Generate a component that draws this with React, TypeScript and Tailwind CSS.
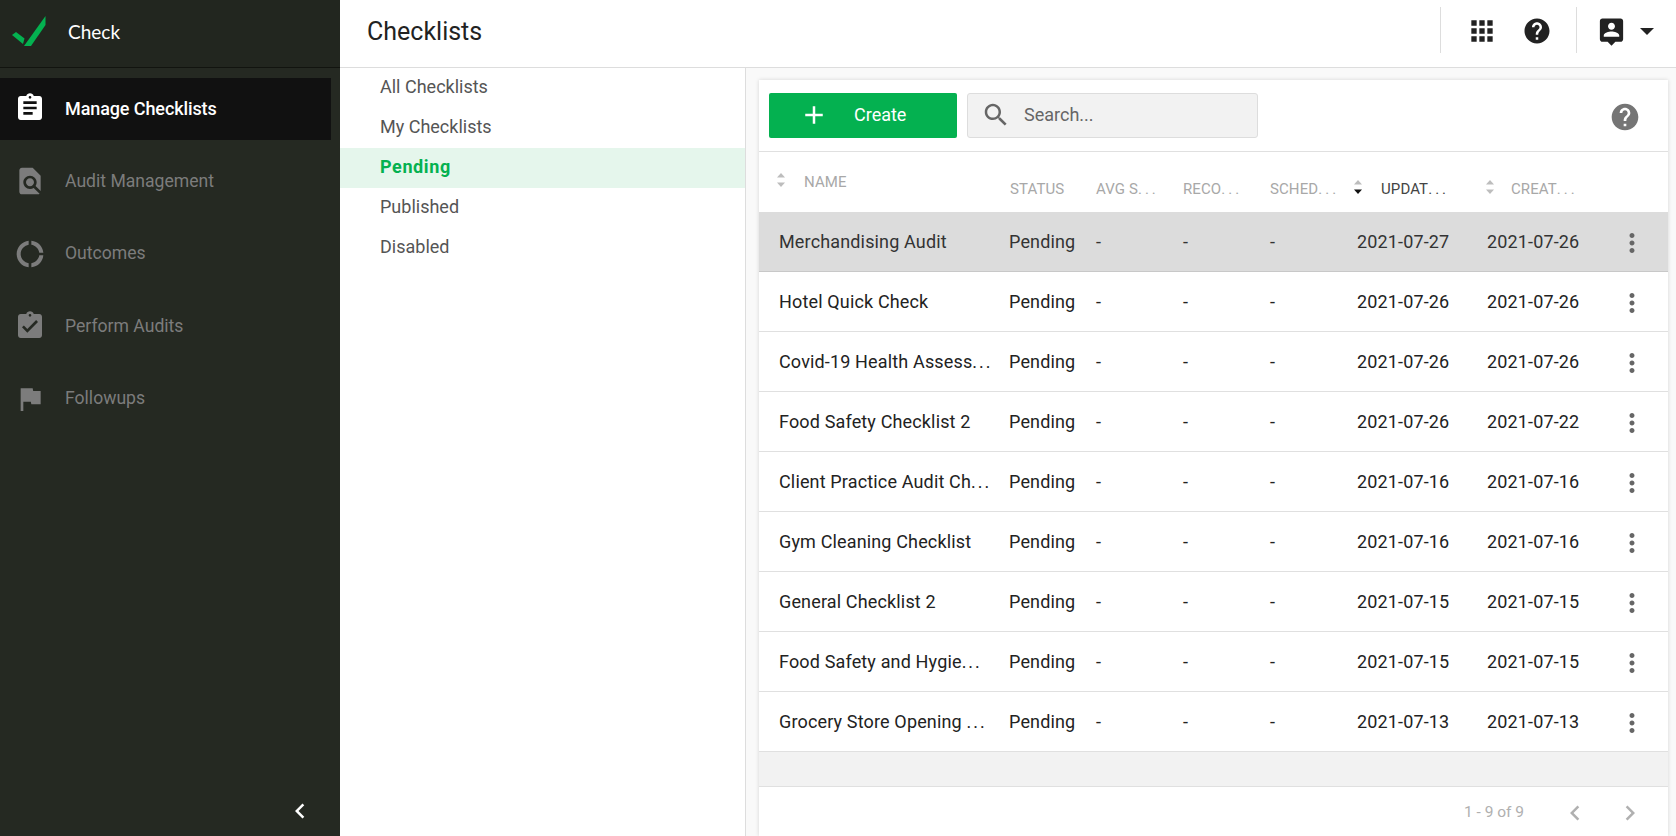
import React from 'react';

const ICONS = {
  assignment: 'M19 3h-4.18C14.4 1.84 13.3 1 12 1c-1.3 0-2.4.84-2.82 2H5c-1.1 0-2 .9-2 2v14c0 1.1.9 2 2 2h14c1.1 0 2-.9 2-2V5c0-1.1-.9-2-2-2zm-7 0c.55 0 1 .45 1 1s-.45 1-1 1-1-.45-1-1 .45-1 1-1zm2 14H7v-2h7v2zm3-4H7v-2h10v2zm0-4H7V7h10v2z',
  findInPage: 'M20 19.59V8l-6-6H6c-1.1 0-1.99.9-1.99 2L4 20c0 1.1.89 2 1.99 2H18c.45 0 .85-.15 1.19-.4l-4.43-4.43c-.8.52-1.74.83-2.76.83-2.76 0-5-2.24-5-5s2.24-5 5-5 5 2.24 5 5c0 1.02-.31 1.96-.83 2.75L20 19.59zM9 13c0 1.66 1.34 3 3 3s3-1.34 3-3-1.34-3-3-3-3 1.34-3 3z',
  donut: 'M11 5.08V2c-5 .5-9 4.81-9 10s4 9.5 9 10v-3.08c-3-.48-6-3.23-6-6.92s3-6.44 6-6.92zM18.97 11H22c-.47-5-4-8.53-9-9v3.08C16 5.51 18.54 8 18.97 11zM13 18.92V22c5-.47 8.53-4 9-9h-3.03c-.43 3-2.97 5.49-5.97 5.92z',
  turnedIn: 'M19 3h-4.18C14.4 1.84 13.3 1 12 1c-1.3 0-2.4.84-2.82 2H5c-1.1 0-2 .9-2 2v14c0 1.1.9 2 2 2h14c1.1 0 2-.9 2-2V5c0-1.1-.9-2-2-2zm-7 0c.55 0 1 .45 1 1s-.45 1-1 1-1-.45-1-1 .45-1 1-1zm-2 14l-4-4 1.41-1.41L10 14.17l6.59-6.59L18 9l-8 8z',
  flag: 'M14.4 6L14 4H5v17h2v-7h5.6l.4 2h7V6z',
  apps: 'M4 8h4V4H4v4zm6 12h4v-4h-4v4zm-6 0h4v-4H4v4zm0-6h4v-4H4v4zm6 0h4v-4h-4v4zm6-10v4h4V4h-4zm-6 4h4V4h-4v4zm6 6h4v-4h-4v4zm0 6h4v-4h-4v4z',
  help: 'M12 2C6.48 2 2 6.48 2 12s4.48 10 10 10 10-4.48 10-10S17.52 2 12 2zm1 17h-2v-2h2v2zm2.07-7.75l-.9.92C13.45 12.9 13 13.5 13 15h-2v-.5c0-1.1.45-2.1 1.17-2.83l1.24-1.26c.37-.36.59-.86.59-1.41 0-1.1-.9-2-2-2s-2 .9-2 2H8c0-2.21 1.79-4 4-4s4 1.79 4 4c0 .88-.36 1.68-.93 2.25z',
  personPin: 'M19 2H5c-1.11 0-2 .9-2 2v14c0 1.1.89 2 2 2h4l3 3 3-3h4c1.1 0 2-.9 2-2V4c0-1.1-.9-2-2-2zm-7 3.3c1.49 0 2.7 1.21 2.7 2.7 0 1.49-1.21 2.7-2.7 2.7-1.49 0-2.7-1.21-2.7-2.7 0-1.49 1.21-2.7 2.7-2.7zM18 16H6v-.9c0-2 4-3.1 6-3.1s6 1.1 6 3.1v.9z',
  search: 'M15.5 14h-.79l-.28-.27C15.41 12.59 16 11.11 16 9.5 16 5.91 13.09 3 9.5 3S3 5.91 3 9.5 5.91 16 9.5 16c1.61 0 3.09-.59 4.23-1.57l.27.28v.79l5 4.99L20.49 19l-4.99-5zm-6 0C7.01 14 5 11.99 5 9.5S7.01 5 9.5 5 14 7.01 14 9.5 11.99 14 9.5 14z',
  add: 'M19 13h-6v6h-2v-6H5v-2h6V5h2v6h6v2z',
  more: 'M12 8c1.1 0 2-.9 2-2s-.9-2-2-2-2 .9-2 2 .9 2 2 2zm0 2c-1.1 0-2 .9-2 2s.9 2 2 2 2-.9 2-2-.9-2-2-2zm0 6c-1.1 0-2 .9-2 2s.9 2 2 2 2-.9 2-2-.9-2-2-2z',
  left: 'M15.41 7.41L14 6l-6 6 6 6 1.41-1.41L10.83 12z',
  right: 'M10 6L8.59 7.41 13.17 12l-4.58 4.59L10 18l6-6z',
};

const Icon = ({ d, className }: { d: string; className?: string }) => (
  <svg viewBox="0 0 24 24" fill="currentColor" className={className}>
    <path d={d} />
  </svg>
);

const SortIcon = ({ active }: { active?: boolean }) => (
  <svg viewBox="0 0 10 16" className="w-[10px] h-[16px] shrink-0">
    <path d="M5 1l4 4.5H1z" fill="#bdbdbd" />
    <path d="M5 15l4-4.5H1z" fill={active ? '#111111' : '#bdbdbd'} />
  </svg>
);

const Clipped = ({ text, dots }: { text: string; dots: string }) =>
  text.endsWith('...') ? (
    <>
      {text.slice(0, -3)}
      <span className={dots}>...</span>
    </>
  ) : (
    <>{text}</>
  );

const navItems = [
  { label: 'Manage Checklists', icon: ICONS.assignment, active: true },
  { label: 'Audit Management', icon: ICONS.findInPage },
  { label: 'Outcomes', icon: ICONS.donut },
  { label: 'Perform Audits', icon: ICONS.turnedIn },
  { label: 'Followups', icon: ICONS.flag },
];

const filters = ['All Checklists', 'My Checklists', 'Pending', 'Published', 'Disabled'];

const rows = [
  ['Merchandising Audit', '2021-07-27', '2021-07-26'],
  ['Hotel Quick Check', '2021-07-26', '2021-07-26'],
  ['Covid-19 Health Assess...', '2021-07-26', '2021-07-26'],
  ['Food Safety Checklist 2', '2021-07-26', '2021-07-22'],
  ['Client Practice Audit Ch...', '2021-07-16', '2021-07-16'],
  ['Gym Cleaning Checklist', '2021-07-16', '2021-07-16'],
  ['General Checklist 2', '2021-07-15', '2021-07-15'],
  ['Food Safety and Hygie...', '2021-07-15', '2021-07-15'],
  ['Grocery Store Opening ...', '2021-07-13', '2021-07-13'],
];

const gridCols = 'grid grid-cols-[250px_87px_87px_87px_87px_130px_130px_1fr]';

const App = () => {
  return (
    <div className="flex w-[1676px] h-[836px] overflow-hidden bg-white font-['Roboto',sans-serif] text-[18px] text-[#222222]">
      {/* Sidebar */}
      <aside className="w-[340px] shrink-0 flex flex-col bg-[#252922] relative">
        <div className="h-[68px] shrink-0 flex items-center bg-[#22261f] border-b border-[#12140f]">
          <svg viewBox="0 0 46 67" className="w-[46px] h-[67px] shrink-0">
            <polygon points="12,35 16,32 24.5,38.5 23,44" fill="#04b150" />
            <polygon points="24,46 45.5,16 45.5,25 31,46" fill="#04b150" />
          </svg>
          <span className="ml-[22px] pb-[2px] font-['Lato',sans-serif] text-[19px] text-white">Check</span>
        </div>
        <nav className="flex flex-col pt-[10px] pr-[9px]">
          {navItems.map((item) => (
            <div
              key={item.label}
              className={`h-[62px] mb-[10.5px] flex items-center pl-[14px] ${item.active ? 'bg-[#111111] text-white font-medium tracking-[-0.1px] pb-[2px]' : 'text-[#7c7c7c] text-[17.6px] pb-[1px]'}`}
            >
              <Icon d={item.icon} className="w-[32px] h-[32px] shrink-0" />
              <span className="ml-[19px]">{item.label}</span>
            </div>
          ))}
        </nav>
        <div className="mt-auto h-[60px] pt-[9px] flex items-center justify-end pr-[25px] text-white">
          <Icon d={ICONS.left} className="w-[30px] h-[30px]" />
        </div>
      </aside>

      <div className="flex-1 flex flex-col min-w-0">
        {/* Top bar */}
        <header className="h-[68px] shrink-0 flex items-center border-b border-[#dddddd] bg-white">
          <h1 className="ml-[27px] pb-[4px] text-[25px] text-[#222222]">Checklists</h1>
          <div className="ml-auto flex items-center h-[46px] mt-[-7px]">
            <div className="w-px h-full bg-[#dddddd]" />
            <Icon d={ICONS.apps} className="ml-[25px] mt-[2px] w-[32px] h-[32px] text-[#222222]" />
            <Icon d={ICONS.help} className="ml-[24px] mt-[2px] w-[30px] h-[30px] text-[#222222]" />
            <div className="ml-[24px] w-px h-full bg-[#dddddd]" />
            <Icon d={ICONS.personPin} className="ml-[19px] mt-[2px] w-[31px] h-[31px] text-[#222222]" />
            <div className="ml-[13px] mr-[22px] mt-[2px] w-0 h-0 border-x-[7px] border-x-transparent border-t-[7px] border-t-[#222222]" />
          </div>
        </header>

        <div className="flex-1 flex min-h-0">
          {/* Filter list */}
          <ul className="w-[406px] shrink-0 border-r border-[#dddddd] bg-white">
            {filters.map((f) => (
              <li
                key={f}
                className={`h-[40px] flex items-center pl-[40px] pb-[4px] ${f === 'Pending' ? 'bg-[#e5f6ec] text-[#04b150] font-bold tracking-[0.6px]' : 'text-[#555555]'}`}
              >
                {f}
              </li>
            ))}
          </ul>

          {/* Table card */}
          <div className="flex-1 min-w-0 bg-[#f9f9f9] pt-[12px] pl-[13px] pr-[8px]">
            <div className="h-full bg-white shadow-[0_0_4px_rgba(0,0,0,0.15)] flex flex-col">
              <div className="h-[72px] shrink-0 flex items-center pl-[10px] pr-[27px] border-b border-[#e0e0e0]">
                <button className="w-[188px] h-[45px] rounded-[2px] bg-[#04b150] text-white flex items-center pl-[30px] pb-[2px]">
                  <Icon d={ICONS.add} className="w-[30px] h-[30px] shrink-0" />
                  <span className="ml-[25px]">Create</span>
                </button>
                <div className="ml-[10px] w-[291px] h-[45px] rounded-[3px] bg-[#f2f2f2] border border-[#dddddd] flex items-center pl-[13px] pb-[2px] text-[#666666]">
                  <Icon d={ICONS.search} className="w-[30px] h-[30px] shrink-0" />
                  <span className="ml-[13px]">Search...</span>
                </div>
                <Icon d={ICONS.help} className="ml-auto mt-[3px] w-[32px] h-[32px] text-[#757575]" />
              </div>

              <div className={`${gridCols} h-[60px] shrink-0 text-[15px] tracking-[0.1px] text-[#a8a8a8]`}>
                <div className="flex items-start pl-[17px] pt-[20px]">
                  <SortIcon />
                  <span className="ml-[18px] -mt-[1px]">NAME</span>
                </div>
                <div className="pt-[26px] pl-[1px]">STATUS</div>
                <div className="pt-[26px]"><Clipped text="AVG S..." dots="tracking-[3px]" /></div>
                <div className="pt-[26px]"><Clipped text="RECO..." dots="tracking-[3px]" /></div>
                <div className="pt-[26px]"><Clipped text="SCHED..." dots="tracking-[3px]" /></div>
                <div className="flex items-start pt-[27px] -ml-[4px]">
                  <SortIcon active />
                  <span className="ml-[18px] -mt-[1px] text-[#444444]"><Clipped text="UPDAT..." dots="tracking-[3px]" /></span>
                </div>
                <div className="flex items-start pt-[27px] -ml-[2px]">
                  <SortIcon />
                  <span className="ml-[16px] -mt-[1px]"><Clipped text="CREAT..." dots="tracking-[3px]" /></span>
                </div>
              </div>

              {rows.map(([name, updated, created], i) => (
                <div
                  key={name}
                  className={`${gridCols} h-[60px] shrink-0 items-center border-b tracking-[0.15px] ${i === 0 ? 'bg-[#dcdcdc] border-[#c8c8c8] text-[#333333]' : 'border-[#e0e0e0]'}`}
                >
                  <div className="pl-[20px] whitespace-nowrap"><Clipped text={name} dots="tracking-[2px]" /></div>
                  <div>Pending</div>
                  <div>-</div>
                  <div>-</div>
                  <div>-</div>
                  <div>{updated}</div>
                  <div>{created}</div>
                  <div className="pt-[2px]">
                    <Icon d={ICONS.more} className="w-[30px] h-[30px] text-[#666666]" />
                  </div>
                </div>
              ))}

              <div className="h-[35px] shrink-0 bg-[#f2f2f2] border-b border-[#e0e0e0]" />

              <div className="flex-1 flex items-center justify-end pr-[23px] pt-[3px] text-[#b0b0b0]">
                <span className="text-[15.5px]">1 - 9 of 9</span>
                <Icon d={ICONS.left} className="ml-[36px] w-[30px] h-[30px]" />
                <Icon d={ICONS.right} className="ml-[25px] w-[30px] h-[30px]" />
              </div>
            </div>
          </div>
        </div>
      </div>
    </div>
  );
};

export default App;
